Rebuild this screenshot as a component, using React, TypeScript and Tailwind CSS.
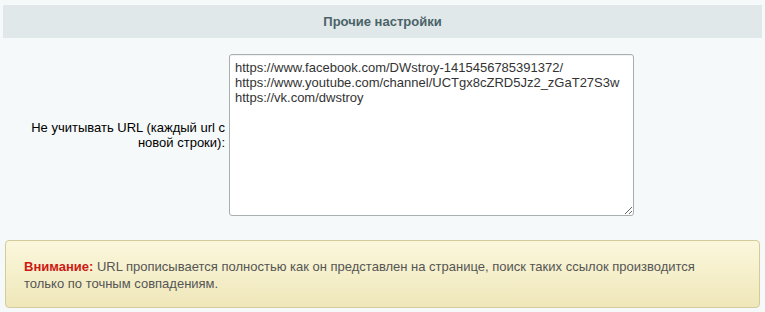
import React from 'react'

const URLS = `https://www.facebook.com/DWstroy-1415456785391372/
https://www.youtube.com/channel/UCTgx8cZRD5Jz2_zGaT27S3w
https://vk.com/dwstroy`

export default function App() {
  return (
    <div className="w-[765px] h-[312px] bg-[#f5f9f9] pt-[5px] font-['Liberation_Sans',Arial,sans-serif] text-[13px] overflow-hidden">
      {/* Section header */}
      <div className="mx-[3px] h-[33px] bg-[#e0e8ea] flex items-center justify-center">
        <span className="font-bold text-[#4b6267]">Прочие настройки</span>
      </div>

      {/* Field row */}
      <div className="flex items-center mt-[16px]">
        <label className="w-[229px] pr-[4px] text-right leading-[15px] text-black">
          Не учитывать URL (каждый url с<br />новой строки):
        </label>
        <textarea
          defaultValue={URLS}
          className="w-[405px] h-[162px] bg-white border border-[#a9afb1] rounded-[3px] px-[5px] py-[5px] text-[13px] leading-[15px] text-[#333] resize-y outline-none shadow-[inset_0_1px_1px_rgba(0,0,0,0.06)]"
        />
      </div>

      {/* Notice */}
      <div className="mx-[5px] mt-[24px] h-[68px] rounded-[4px] border border-[#d3cb9a] bg-gradient-to-b from-[#fbf7dc] to-[#efe7b9] px-[18px] pt-[17px] leading-[17px] text-[#555]">
        <span className="font-bold text-[#cc1a12]">Внимание:</span> URL прописывается полностью как он представлен на странице, поиск таких ссылок производится
        <br />
        только по точным совпадениям.
      </div>
    </div>
  )
}
